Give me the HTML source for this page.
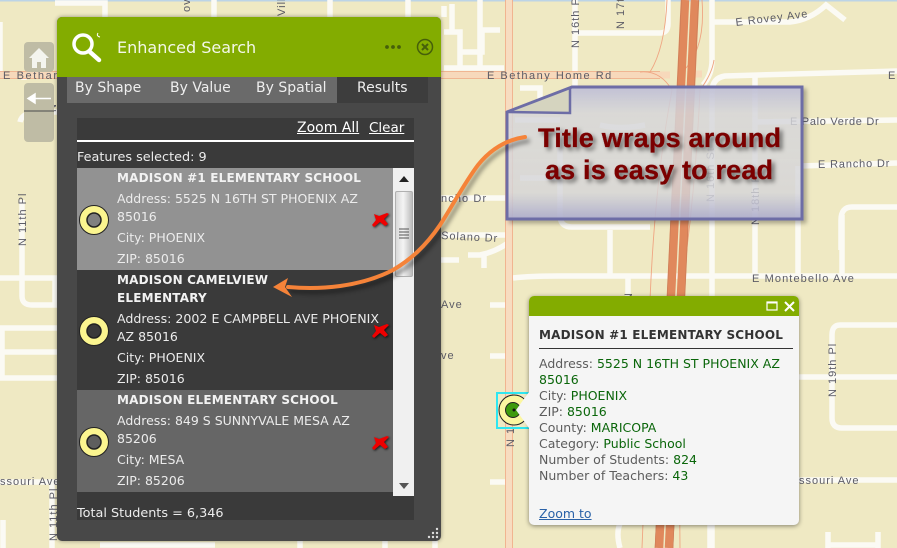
<!DOCTYPE html>
<html><head><meta charset="utf-8">
<style>
html,body{margin:0;padding:0}
body{width:897px;height:548px;overflow:hidden;position:relative;background:#efe9c3;font-family:"DejaVu Sans","Liberation Sans",sans-serif}
svg{position:absolute;left:0;top:0}
.a{position:absolute}
.t{position:absolute;white-space:nowrap;font-size:12.500px;line-height:16px;color:#ececec}
.b{font-size:12px;font-weight:bold;letter-spacing:.18px;color:#f2f2f2}
.p{color:#5c5c5c}.p i{font-style:normal;color:#0a660a}
</style></head><body>
<svg width="897" height="548" viewBox="0 0 897 548">
<rect width="897" height="1.500" fill="#bcd4e6"/>
<g fill="none" stroke="#fbfaf4" stroke-width="5.500">
<path d="M55 3H105V18M214 0V18M330 0V18M408 0V18M444 6V17"/>
<path d="M0 22V75M575 0V86M575 33H660Q668 33 668 24V0M712 0V60Q712 75 703 85"/>
<path d="M712 22H790Q810 20 826 5L845 20"/>
<path d="M897 71L725 76Q712 78 712 92V548"/>
<path d="M755 76V278M757 122L897 120M800 166L897 163M798 166V278M842 215V278M897 207H852Q841 207 841 220V250"/>
<path d="M513 278Q530 276 560 276H897"/>
<path d="M610 230V278M628 278V300M560 130V215Q560 227 572 227H650M568 101H540V88H520M645 125Q620 130 600 125M520 178H560M515 120H560"/>
<path d="M444 32H460V52H482V30H500M460 52V68M444 68H504M452 4V32M480 0V68"/>
<path d="M441 198H507M441 235H507M441 260H459M468 255H480Q495 252 508 243M484 256V268"/>
<path d="M22 200V278M0 278H57M22 278V296Q22 305 32 305H55V278M0 328H57M0 352H57M0 378H57M2 328V378M52 482V548M0 482H57M3 520V548"/>
<path d="M20 122Q22 112 40 112H57M24 75V80"/>
<path d="M490 305H507M490 356H507M490 482H507M535 482H548M710 300V548M622 520Q615 530 620 548"/>
<path d="M897 325H840Q832 325 832 335V418Q832 428 842 428H897M799 377H897M799 480H897M828 532V548M878 532V548M828 545H878"/>
<path d="M100 545H215M300 530V548M385 530V548M435 530V548"/>
</g>
<g fill="none">
<path d="M0 75H670M690 74H702" stroke="#f7d9bb" stroke-width="7"/>
<path d="M0 71.500H660M0 78.500H660" stroke="#f0a884" stroke-width=".8"/>
<path d="M509 0V548" stroke="#f7dcc0" stroke-width="7"/>
<path d="M505.500 0V548M512.500 0V548" stroke="#f0a884" stroke-width=".8"/>
<path d="M667 0Q665 48 650 72M702 0Q706 50 682 72M640 72Q660 70 672 90M700 90Q712 74 714 60M672 90Q655 180 650 300M700 90Q695 200 680 300M642 548L652 300M678 300L680 548" stroke="#efa582" stroke-width=".9"/>
<path d="M685 0L659 548" stroke="#e0885c" stroke-width="8.500"/>
<path d="M695 0L669 548" stroke="#e0885c" stroke-width="8.500"/>
<path d="M681.500 0L655 548M698.500 0L673 548" stroke="#c97c58" stroke-width=".6"/>
</g>
<g font-family="Liberation Sans,sans-serif" font-size="11" fill="#5c5c66" letter-spacing="1">
<text x="3" y="79" letter-spacing="1.600">E Bethany</text>
<text x="487" y="79" letter-spacing="1.500">E Bethany Home Rd</text>
<text x="736" y="26" transform="rotate(-7 736 26)" letter-spacing=".95">E Rovey Ave</text>
<text x="888" y="79">E</text>
<text x="790" y="125" letter-spacing=".7">E Palo Verde Dr</text>
<text x="818" y="168" transform="rotate(-1 818 168)" letter-spacing=".85">E Rancho Dr</text>
<text x="752" y="282" letter-spacing="1.100">E Montebello Ave</text>
<text x="441" y="239" transform="rotate(3 441 239)" letter-spacing=".9">Solano Dr</text>
<text x="441" y="202" letter-spacing="1.100">ncho Dr</text>
<text x="441" y="308">Ave</text>
<text x="441" y="359">ve</text>
<text x="0" y="485">ssouri Ave</text>
<text x="799" y="484">ssouri Ave</text>
<text x="579" y="48" transform="rotate(-90 579 48)">N 16th Pl</text>
<text x="624" y="29" transform="rotate(-90 624 29)">N 17th</text>
<text x="26" y="246" transform="rotate(-90 26 246)">N 11th Pl</text>
<text x="57" y="541" transform="rotate(-90 57 541)">N 11th Pl</text>
<text x="714" y="202" transform="rotate(-90 714 202)" opacity=".75">N 16th St</text>
<text x="759" y="225" transform="rotate(-90 759 225)">N 18th Pl</text>
<text x="632" y="301" transform="rotate(-90 632 301)">N</text>
<text x="514" y="447" transform="rotate(-90 514 447)">N 1</text>
<text x="836" y="397" transform="rotate(-90 836 397)">N 19th Pl</text>
<text x="190" y="12" transform="rotate(-90 190 12)">ov</text>
<text x="285" y="16" transform="rotate(-90 285 16)">Vill</text>
<text x="56" y="112" transform="rotate(-90 56 112)">N</text>
</g>
<!-- left buttons -->
<rect x="24" y="42" width="30" height="30" rx="4" fill="#bfbca5"/>
<path d="M39 48L49 58H46V68H41V62H37V68H32V58H29Z" fill="#f4f4ee"/>
<rect x="24" y="83" width="30" height="59" rx="4" fill="#bfbca5"/>
<path d="M34 98.500H51M28 98.500L35 94V103Z" stroke="#fff" stroke-width="1.500" fill="#fff"/>
<path d="M24 111H54" stroke="#4a4a4a" stroke-width="1"/>
<!-- selected symbol -->
<circle cx="514" cy="410" r="15" fill="#fbf6a0" stroke="#222"/>
<circle cx="513" cy="410" r="7.500" fill="#3e9a0c" stroke="#222"/>
<circle cx="514" cy="410" r="1.500" fill="#111"/>
<path d="M529 393H497V428H529" fill="none" stroke="#2fe6f0" stroke-width="2"/>
</svg>

<!-- main panel -->
<div class="a" style="left:57px;top:17px;width:384px;height:524px;background:#484848;border-radius:5px;box-shadow:0 0 4px rgba(0,0,0,.4)"></div>
<div class="a" style="left:57px;top:17px;width:384px;height:60px;background:#83ac00;border-radius:5px 5px 0 0"></div>
<svg width="897" height="548" viewBox="0 0 897 548">
<circle cx="83" cy="44" r="9" fill="none" stroke="#fff" stroke-width="3.500"/>
<path d="M90 52L99 60" stroke="#fff" stroke-width="4.500" stroke-linecap="round"/>
<path d="M100 37Q96 36 98 33" stroke="#fff" fill="none" stroke-width="1"/>
<g fill="#46600a"><circle cx="387" cy="47" r="1.900"/><circle cx="393" cy="47" r="1.900"/><circle cx="399" cy="47" r="1.900"/></g>
<circle cx="425" cy="47" r="7.500" fill="none" stroke="#46600a" stroke-width="1.500"/>
<path d="M422 44L428 50M428 44L422 50" stroke="#46600a" stroke-width="2"/>
</svg>
<div class="t" style="left:117px;top:38px;font-size:16px;line-height:20px;color:#f4f8e8">Enhanced Search</div>
<div class="a" style="left:67px;top:77px;width:270px;height:26px;background:#6a6a6a"></div>
<div class="a" style="left:337px;top:77px;width:91px;height:26px;background:#3d3d3d"></div>
<div class="t" style="left:75px;top:80px;font-size:14px;line-height:17px;color:#eee">By Shape</div>
<div class="t" style="left:170px;top:80px;font-size:14px;line-height:17px;color:#eee">By Value</div>
<div class="t" style="left:256px;top:80px;font-size:14px;line-height:17px;color:#eee">By Spatial</div>
<div class="t" style="left:357px;top:80px;font-size:14px;line-height:17px;color:#eee">Results</div>

<div class="a" style="left:77px;top:118px;width:337px;height:402px;background:#3a3a3a"></div>
<div class="a" style="left:77px;top:140px;width:337px;height:2px;background:#fff"></div>
<div class="t" style="left:297px;top:120px;font-size:14px;line-height:17px;color:#fff;text-decoration:underline">Zoom All</div>
<div class="t" style="left:369px;top:120px;font-size:13.500px;line-height:17px;color:#fff;text-decoration:underline">Clear</div>
<div class="t" style="left:77px;top:149.500px;font-size:12.800px">Features selected: 9</div>

<div class="a" style="left:77px;top:168px;width:316px;height:102px;background:#929292"></div>
<div class="a" style="left:77px;top:270px;width:316px;height:120px;background:#3a3a3a"></div>
<div class="a" style="left:77px;top:390px;width:316px;height:102px;background:#666"></div>
<div class="a" style="left:393px;top:168px;width:21px;height:328px;background:#f0f0f0"></div>
<div class="a" style="left:395px;top:191px;width:18px;height:86px;background:linear-gradient(90deg,#d8d8d8,#f4f4f4 45%,#bdbdbd);border:1px solid #b0b0b0;box-sizing:border-box;border-radius:2px"></div>
<svg width="897" height="548" viewBox="0 0 897 548">
<path d="M399 182H409L404 176Z" fill="#222"/>
<path d="M399 483H409L404 489Z" fill="#555"/>
<path d="M399 229H409M399 232H409M399 235H409M399 238H409" stroke="#555" stroke-width="1"/>
<g stroke="#222" stroke-width="1" fill="#fbf58f">
<circle cx="94" cy="220" r="14.500"/><circle cx="94" cy="331" r="14.500"/><circle cx="94" cy="442" r="14.500"/>
</g>
<circle cx="94" cy="220" r="7" fill="#808080" stroke="#222" stroke-width="1.500"/>
<circle cx="94" cy="331" r="7" fill="#3a3a3a" stroke="#222" stroke-width="1.500"/>
<circle cx="94" cy="442" r="7" fill="#5e5e5e" stroke="#222" stroke-width="1.500"/>
<g fill="#ee0000" style="filter:drop-shadow(1px 1px 1px rgba(0,0,0,.7))">
<path d="M374 214L379 216L387 213L389 214L384 219L388 224L385 226L380 222L374 227L372 225L376 220Z"/>
<path d="M374 325L379 327L387 324L389 325L384 330L388 335L385 337L380 333L374 338L372 336L376 331Z"/>
<path d="M374 437L379 439L387 436L389 437L384 442L388 447L385 449L380 445L374 450L372 448L376 443Z"/>
</g>
</svg>

<div class="t b" style="left:117px;top:170px">MADISON #1 ELEMENTARY SCHOOL</div>
<div class="t" style="left:117px;top:191px">Address: 5525 N 16TH ST PHOENIX AZ</div>
<div class="t" style="left:117px;top:209px">85016</div>
<div class="t" style="left:117px;top:230px">City: PHOENIX</div>
<div class="t" style="left:117px;top:251px">ZIP: 85016</div>

<div class="t b" style="left:117px;top:272px">MADISON CAMELVIEW</div>
<div class="t b" style="left:117px;top:290px">ELEMENTARY</div>
<div class="t" style="left:117px;top:311px;font-size:12.600px">Address: 2002 E CAMPBELL AVE PHOENIX</div>
<div class="t" style="left:117px;top:329px">AZ 85016</div>
<div class="t" style="left:117px;top:350px">City: PHOENIX</div>
<div class="t" style="left:117px;top:371px">ZIP: 85016</div>

<div class="t b" style="left:117px;top:392px">MADISON ELEMENTARY SCHOOL</div>
<div class="t" style="left:117px;top:413px">Address: 849 S SUNNYVALE MESA AZ</div>
<div class="t" style="left:117px;top:431px">85206</div>
<div class="t" style="left:117px;top:452px">City: MESA</div>
<div class="t" style="left:117px;top:473px">ZIP: 85206</div>
<div class="t" style="left:77px;top:506px;font-size:12.800px">Total Students = 6,346</div>

<svg width="897" height="548" viewBox="0 0 897 548">
<g fill="#ddd"><circle cx="437" cy="529" r="1.200"/><circle cx="433" cy="533" r="1.200"/><circle cx="437" cy="533" r="1.200"/><circle cx="429" cy="537" r="1.200"/><circle cx="433" cy="537" r="1.200"/><circle cx="437" cy="537" r="1.200"/></g>
</svg>

<!-- popup -->
<div class="a" style="left:529px;top:296px;width:270px;height:229px;background:#f5f5f5;border-radius:5px;box-shadow:0 1px 5px rgba(0,0,0,.45)"></div>
<div class="a" style="left:529px;top:296px;width:270px;height:20px;background:#83ac00;border-radius:5px 5px 0 0"></div>
<svg width="897" height="548" viewBox="0 0 897 548">
<path d="M529 392L516 410L529 428Z" fill="#f5f5f5"/>
<rect x="767" y="302" width="10" height="8" fill="none" stroke="#fff" stroke-width="1.200"/><path d="M767 302.500H777" stroke="#fff" stroke-width="2"/>
<path d="M785 302L794 311M794 302L785 311" stroke="#fff" stroke-width="2"/>
<path d="M539 348.500H793" stroke="#333" stroke-width="1"/>
</svg>
<div class="t b" style="left:539px;top:327px;color:#333">MADISON #1 ELEMENTARY SCHOOL</div>
<div class="t p" style="left:539px;top:356px">Address: <i>5525 N 16TH ST PHOENIX AZ</i></div>
<div class="t p" style="left:539px;top:372px"><i>85016</i></div>
<div class="t p" style="left:539px;top:388px">City: <i>PHOENIX</i></div>
<div class="t p" style="left:539px;top:404px">ZIP: <i>85016</i></div>
<div class="t p" style="left:539px;top:420px">County: <i>MARICOPA</i></div>
<div class="t p" style="left:539px;top:436px">Category: <i>Public School</i></div>
<div class="t p" style="left:539px;top:452px">Number of Students: <i>824</i></div>
<div class="t p" style="left:539px;top:468px">Number of Teachers: <i>43</i></div>
<div class="t" style="left:539px;top:506px;color:#2a62a8;text-decoration:underline">Zoom to</div>

<!-- annotation -->
<svg width="897" height="548" viewBox="0 0 897 548">
<defs>
<linearGradient id="g1" x1="0" y1="0" x2="0" y2="1"><stop offset="0" stop-color="#c0c0d8" stop-opacity=".92"/><stop offset=".2" stop-color="#dcdce0" stop-opacity=".78"/><stop offset=".8" stop-color="#dcdce0" stop-opacity=".75"/><stop offset="1" stop-color="#adadce" stop-opacity=".92"/></linearGradient>
<filter id="sh" x="-10%" y="-10%" width="120%" height="120%"><feDropShadow dx="3" dy="3" stdDeviation="2" flood-color="#000" flood-opacity=".3"/></filter>
</defs>
<path d="M507 112L572 87H802V219H507Z" fill="url(#g1)" stroke="#6d6da6" stroke-width="3" filter="url(#sh)"/>
<path d="M507 112L570 88V113Z" fill="#d5d4bf" stroke="#6d6da6" stroke-width="2.500"/>
<path d="M525 137C505 140 490 150 478 165C465 182 450 210 440 225C425 247 410 260 393 270C360 287 320 290 288 287" fill="none" stroke="#f58339" stroke-width="4" stroke-linecap="round" style="filter:drop-shadow(3px 4px 2px rgba(0,0,0,.4))"/>
<path d="M273 287L288 278L285 287L292 297Z" fill="#f58339"/>
<g font-family="Liberation Sans,sans-serif" font-weight="bold" font-size="27" fill="#7b0000" stroke="#7b0000" stroke-width=".3" style="filter:drop-shadow(3px 3px 2px rgba(0,0,0,.5))">
<text x="538" y="147" textLength="243">Title wraps around</text>
<text x="545" y="179" textLength="228">as is easy to read</text>
</g>
</svg>
</body></html>
